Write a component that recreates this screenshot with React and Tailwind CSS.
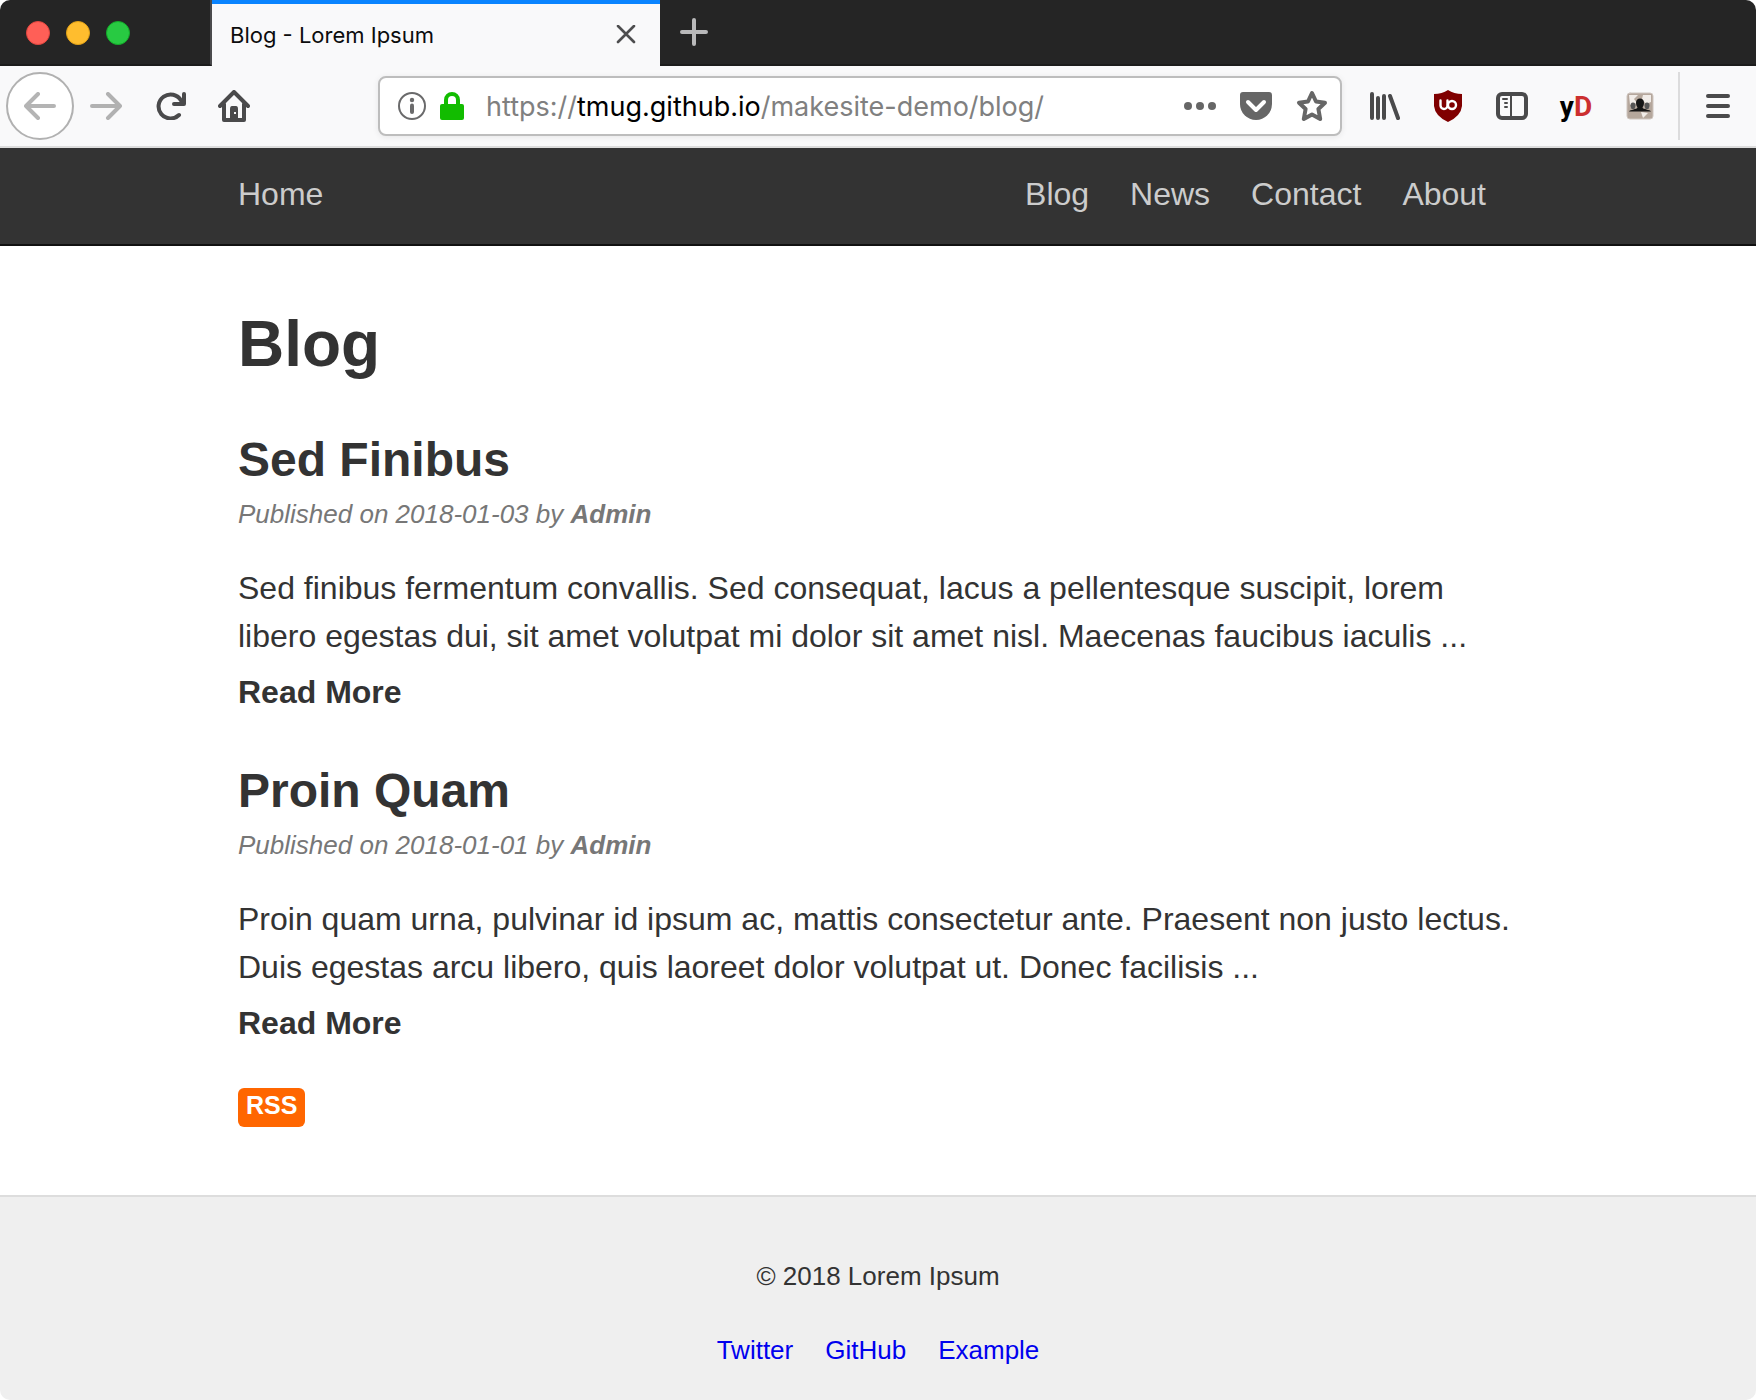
const UI = "font-['Inter',sans-serif]";

function Svg({ w, h, children, className }) {
  return (
    <svg width={w} height={h} viewBox={`0 0 ${w} ${h}`} fill="none" strokeLinecap="round" strokeLinejoin="round" className={className} aria-hidden="true">
      {children}
    </svg>
  );
}

function IconButton({ label, children, className = "" }) {
  return (
    <button type="button" aria-label={label} className={`flex shrink-0 items-center justify-center ${className}`}>
      {children}
    </button>
  );
}

function TabBar() {
  return (
    <div className="flex h-[66px] rounded-t-[10px] bg-[#252525]">
      <div className="flex w-[212px] shrink-0 items-center gap-4 border-r-2 border-b-2 border-r-[#4a4a4c] border-b-[#1c1c1c] pt-[2px] pl-[26px]">
        <IconButton label="Close window" className="size-6 rounded-full border border-[#e2463f] bg-[#ff5f57]" />
        <IconButton label="Minimize window" className="size-6 rounded-full border border-[#e1a116] bg-[#ffbd2e]" />
        <IconButton label="Zoom window" className="size-6 rounded-full border border-[#12ac28] bg-[#28ca42]" />
      </div>
      <div className="flex w-[448px] shrink-0 items-center justify-between border-t-4 border-[#0a84ff] bg-[#f9f9fa] pr-6 pl-[18px] text-[#0c0c0d]">
        <span className={`text-[22px] leading-8 ${UI}`}>Blog - Lorem Ipsum</span>
        <IconButton label="Close tab">
          <Svg w={20} h={20}>
            <path d="M2 1 18 17M18 1 2 17" stroke="#4d4d4e" strokeWidth="2.6" />
          </Svg>
        </IconButton>
      </div>
      <div className="flex grow items-center border-b-2 border-[#1c1c1c] pl-5">
        <IconButton label="New tab">
          <Svg w={28} h={28}>
            <path d="M14 2V26M2 14H26" stroke="#b9b9ba" strokeWidth="4" />
          </Svg>
        </IconButton>
      </div>
    </div>
  );
}

function UrlBar() {
  return (
    <div className="flex h-[60px] min-w-0 grow items-center rounded-[8px] border-2 border-[#bdbdbd] bg-white pr-3 pl-[18px] shadow-[0_1px_6px_rgba(0,0,0,0.08)]">
      <IconButton label="Site information">
        <Svg w={28} h={28}>
          <circle cx="14" cy="14" r="13" stroke="#6a6a6b" strokeWidth="2" />
          <circle cx="14" cy="8" r="2.2" fill="#6a6a6b" />
          <path d="M14 13.5V20" stroke="#6a6a6b" strokeWidth="4" />
        </Svg>
      </IconButton>
      <IconButton label="Secure connection" className="ml-[14px]">
        <Svg w={24} h={28}>
          <rect y="12" width="24" height="16" rx="2" fill="#12bc00" />
          <path d="M6 13V8a6 6 0 0 1 12 0V13" stroke="#12bc00" strokeWidth="4" />
        </Svg>
      </IconButton>
      <div className={`ml-[22px] grow whitespace-nowrap pt-[2px] text-[27px] leading-9 text-[#808080] ${UI}`}>
        https://<span className="text-black">tmug.github.io</span>/makesite-demo/blog/
      </div>
      <div className="flex items-center gap-6">
        <IconButton label="Page actions">
          <Svg w={32} h={8}>
            <g fill="#666">
              <circle cx="4" cy="4" r="4" />
              <circle cx="16" cy="4" r="4" />
              <circle cx="28" cy="4" r="4" />
            </g>
          </Svg>
        </IconButton>
        <IconButton label="Save to Pocket">
          <Svg w={32} h={28}>
            <path d="M3 0H29Q32 0 32 3V12a16 16 0 0 1-32 0V3Q0 0 3 0Z" fill="#666" />
            <path d="M8 10 16 18 24 10" stroke="#fff" strokeWidth="4" />
          </Svg>
        </IconButton>
        <IconButton label="Bookmark this page">
          <Svg w={32} h={32}>
            <path d="M16 3 20 11.5 29 12.7 22.4 19 24.2 29 16 24.4 7.8 29 9.6 19 3 12.7 12 11.5Z" stroke="#666" strokeWidth="4" />
          </Svg>
        </IconButton>
      </div>
    </div>
  );
}

function Toolbar() {
  return (
    <div className="flex h-[82px] items-center border-b-2 border-[#dddddd] bg-[#f9f9fa] pl-[6px]">
      <IconButton label="Back" className="size-[68px] rounded-full border-2 border-[#b1b1b1] bg-white">
        <Svg w={32} h={28}>
          <path d="M30 14H2M14 2 2 14 14 26" stroke="#b4b4b4" strokeWidth="4" />
        </Svg>
      </IconButton>
      <IconButton label="Forward" className="ml-4">
        <Svg w={32} h={28}>
          <path d="M2 14H30M18 2 30 14 18 26" stroke="#b1b1b1" strokeWidth="4" />
        </Svg>
      </IconButton>
      <IconButton label="Reload" className="ml-[34px]">
        <Svg w={30} h={28}>
          <path d="M23 23A12 12 0 1 1 25 8.5" stroke="#4a4a4b" strokeWidth="4" />
          <path d="M28 2V12H18" stroke="#4a4a4b" strokeWidth="4" />
        </Svg>
      </IconButton>
      <IconButton label="Home" className="ml-8">
        <Svg w={32} h={32}>
          <path d="M2 16 16 2 30 16M6 14V30H26V14" stroke="#4a4a4b" strokeWidth="4" />
          <path d="M12 30V19Q12 16 14 16H18Q20 16 20 19V30Z" fill="#4a4a4b" />
          <rect x="16" y="22" width="2" height="2" fill="#f9f9fa" />
        </Svg>
      </IconButton>
      <div className="flex min-w-0 grow pr-7 pl-32">
        <UrlBar />
      </div>
      <div className="flex items-center gap-8">
        <IconButton label="Library">
          <Svg w={30} h={28}>
            <path d="M2 2V26M8 6V26M14 4V26M20 4 28 26" stroke="#4a4a4b" strokeWidth="4" />
          </Svg>
        </IconButton>
        <IconButton label="uBlock Origin">
          <Svg w={32} h={32}>
            <path d="M16 0Q22 4 30 4V16Q29 26 16 32 3 26 2 16V4Q10 4 16 0Z" fill="#800000" />
            <path d="M8.5 10.500V15.500a3.500 3.500 0 0 0 7 0V10.500" stroke="#fff" strokeWidth="2.4" />
            <circle cx="20" cy="15" r="4" stroke="#fff" strokeWidth="2.4" />
          </Svg>
        </IconButton>
        <IconButton label="Sidebar">
          <Svg w={32} h={28}>
            <rect x="2" y="2" width="28" height="24" rx="4" stroke="#4a4a4b" strokeWidth="4" />
            <path d="M15 3V25M7 7H11M9 11H11M9 15H11" stroke="#4a4a4b" strokeWidth="2" />
          </Svg>
        </IconButton>
        <IconButton label="yD extension" className="w-8 pt-[2px] font-['Roboto',sans-serif] text-[28px] leading-8 font-bold text-black">
          y<span className="text-[#cc2f2f]">D</span>
        </IconButton>
        <IconButton label="Groups extension" className="w-8">
          <Svg w={28} h={28}>
            <rect x="1" y="1" width="26" height="26" rx="3" fill="#b5a79c" stroke="#cfc6c0" />
            <path d="M3 3H12L8 7 11 11 4 13ZM17 3H25V10L20 12 16 7ZM15 20 22 21 17 26Z" fill="#f1ece8" />
            <path d="M7 10.500c2 0 2.500 1.500 2.500 3S8.500 16 8.500 17H5.500c0-1-1-2-1-3.500s.5-3 2.500-3ZM21 10.500c-2 0-2.500 1.500-2.500 3s1 2.500 1 3.500h3c0-1 1-2 1-3.500s-.5-3-2.500-3Z" fill="#555" />
            <path d="M3 19.500C4 17.500 11 17.500 11.500 15.500 10.500 14 10 12.500 10 11c0-3 1.500-4.500 4-4.500s4 1.500 4 4.500c0 1.500-.5 3-1.500 4.500C17 17.500 24 17.500 25 19.500Z" fill="#151515" />
          </Svg>
        </IconButton>
      </div>
      <div className="ml-[22px] h-[68px] w-[2px] bg-[#dcdcdd]" />
      <IconButton label="Open menu" className="mr-[26px] ml-[26px]">
        <Svg w={24} h={24}>
          <path d="M2 2H22M2 12H22M2 22H22" stroke="#4a4a4b" strokeWidth="4" />
        </Svg>
      </IconButton>
    </div>
  );
}

const NAV = ["Blog", "News", "Contact", "About"];

const POSTS = [
  {
    title: "Sed Finibus",
    date: "2018-01-03",
    summary:
      "Sed finibus fermentum convallis. Sed consequat, lacus a pellentesque suscipit, lorem libero egestas dui, sit amet volutpat mi dolor sit amet nisl. Maecenas faucibus iaculis ...",
  },
  {
    title: "Proin Quam",
    date: "2018-01-01",
    summary:
      "Proin quam urna, pulvinar id ipsum ac, mattis consectetur ante. Praesent non justo lectus. Duis egestas arcu libero, quis laoreet dolor volutpat ut. Donec facilisis ...",
  },
];

function Post({ title, date, summary }) {
  return (
    <article>
      <h2 className="text-[48px] leading-[58px] font-bold">
        <a href="#post">{title}</a>
      </h2>
      <p className="mt-[6px] text-[26px] leading-[38px] text-[#777] italic">
        Published on {date} by <b>Admin</b>
      </p>
      <p className="mt-[31px]">{summary}</p>
      <p className="mt-2">
        <a href="#post" className="font-bold">Read More</a>
      </p>
    </article>
  );
}

export default function App() {
  return (
    <div className="flex min-h-screen flex-col bg-white font-['Liberation_Sans',Arial,sans-serif] text-[32px] leading-[48px] text-[#333]">
      <TabBar />
      <Toolbar />
      <nav className="border-b-2 border-[#111] bg-[#333] text-[#ccc]">
        <div className="mx-auto flex max-w-[1280px] items-center justify-between pt-[22px] pb-[26px]">
          <a href="#home">Home</a>
          <div className="mr-8 flex gap-[41px]">
            {NAV.map((n) => (
              <a key={n} href="#nav">{n}</a>
            ))}
          </div>
        </div>
      </nav>
      <main className="mx-auto w-full max-w-[1280px] pt-[60px]">
        <h1 className="mb-[49px] text-[64px] leading-[76px] font-bold">Blog</h1>
        <div className="flex flex-col gap-[46px]">
          {POSTS.map((p) => (
            <Post key={p.title} {...p} />
          ))}
        </div>
        <a href="#rss" className="mt-[41px] block w-fit rounded-[6px] bg-[#ff6600] px-2 pb-1 text-[25px] leading-[35px] font-bold text-white">RSS</a>
      </main>
      <footer className="mt-[68px] grow rounded-b-[10px] border-t-2 border-[#ddd] bg-[#efefef] pt-[60px] text-center text-[26px] leading-[38px]">
        <p>© 2018 Lorem Ipsum</p>
        <p className="mt-9 flex justify-center gap-8 text-[#0000ee]">
          <a href="#twitter">Twitter</a>
          <a href="#github">GitHub</a>
          <a href="#example">Example</a>
        </p>
      </footer>
    </div>
  );
}
